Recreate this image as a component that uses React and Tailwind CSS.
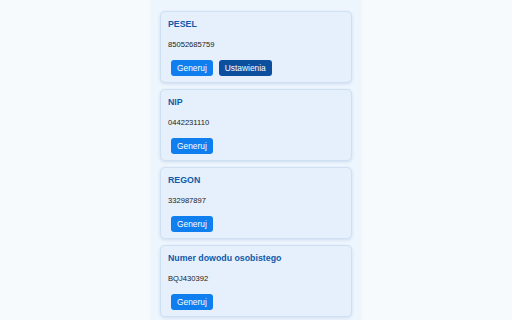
import React from "react";

const cards = [
  { title: "PESEL", value: "85052685759", settings: true },
  { title: "NIP", value: "0442231110" },
  { title: "REGON", value: "332987897" },
  { title: "Numer dowodu osobistego", value: "BQJ430392" },
];

function Card({ title, value, settings }) {
  return (
    <div className="h-[72px] shrink-0 rounded-[5px] border border-[#cfe0f3] bg-[#e5f0fc] shadow-[0_1px_3px_rgba(60,110,170,0.18)] px-[7px] pt-[7px]">
      <div className="text-[8.8px] leading-[10px] font-bold text-[#0f5aab]">{title}</div>
      <div className="mt-[11px] text-[7.6px] leading-[9px] text-[#1a1a1a]">{value}</div>
      <div className="mt-[11px] ml-[3px] flex gap-[6px]">
        <button className="h-[16px] px-[6px] rounded-[3px] bg-[#0f7ff0] text-white text-[8.4px] leading-[16px]">
          Generuj
        </button>
        {settings && (
          <button className="h-[16px] px-[6px] rounded-[3px] bg-[#0c4f9e] text-white text-[8.4px] leading-[16px]">
            Ustawienia
          </button>
        )}
      </div>
    </div>
  );
}

export default function App() {
  return (
    <div
      className="w-full h-[320px] overflow-hidden bg-[#f7fafd] flex justify-center"
      style={{ fontFamily: '"Liberation Sans", Arial, sans-serif' }}
    >
      <div className="w-[212px] h-full bg-[#edf5fd] px-[10px] pt-[11px] flex flex-col gap-[6px]">
        {cards.map((c) => (
          <Card key={c.title} {...c} />
        ))}
      </div>
    </div>
  );
}
